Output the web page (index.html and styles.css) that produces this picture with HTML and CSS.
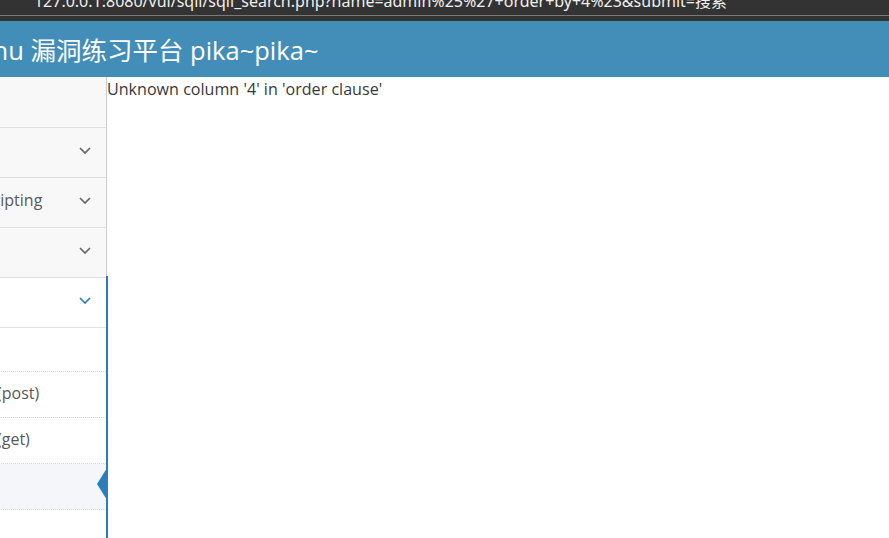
FILE: index.html
```
<!DOCTYPE html>
<html lang="zh-CN">
<head>
<meta charset="utf-8">
<title>SQL-Inject</title>
<link rel="stylesheet" href="styles.css">
</head>
<body>
<div class="topbar">
  <div class="url"><span class="url-text">127.0.0.1:8080/vul/sqli/sqli_search.php?name=admin%25%27+order+by+4%23&amp;submit=搜索</span></div>
  <div class="url-line"></div>
  <div class="url-bottom"></div>
</div>
<div class="page">
  <header class="navbar"><span class="brand">Pikachu 漏洞练习平台 pika~pika~</span></header>
  <div class="main">
    <nav class="sidebar">
      <ul class="nav-list">
        <li class="item first"><span class="label">系统介绍</span></li>
        <li class="item"><span class="label">暴力破解</span><svg class="chev" viewBox="0 0 12 7"><polyline points="1,1 6,6 11,1"/></svg></li>
        <li class="item"><span class="label">Cross-Site Scripting</span><svg class="chev" viewBox="0 0 12 7"><polyline points="1,1 6,6 11,1"/></svg></li>
        <li class="item"><span class="label">CSRF</span><svg class="chev" viewBox="0 0 12 7"><polyline points="1,1 6,6 11,1"/></svg></li>
        <li class="item open"><span class="label">SQL-Inject</span><svg class="chev" viewBox="0 0 12 7"><polyline points="1,1 6,6 11,1"/></svg></li>
        <li class="submenu">
          <ul>
            <li class="sub first-sub"><span class="label">概述</span></li>
            <li class="sub"><span class="label">数字型注入(post)</span></li>
            <li class="sub"><span class="label">字符型注入(get)</span></li>
            <li class="sub active"><span class="label">搜索型注入</span></li>
            <li class="sub last"><span class="label">xx型注入</span></li>
          </ul>
        </li>
      </ul>
    </nav>
    <main class="content">
      <p class="msg">Unknown column '4' in 'order clause'</p>
    </main>
  </div>
</div>
</body>
</html>
```
FILE: styles.css
```
html, body {
  margin: 0;
  padding: 0;
  background: #ffffff;
  overflow: hidden;
  width: 889px;
  height: 538px;
  font-family: "Open Sans", "Noto Sans CJK SC", sans-serif;
}

.topbar {
  background: #333333;
  height: 21px;
  overflow: hidden;
}
.url {
  height: 15px;
  overflow: hidden;
  display: flex;
  justify-content: flex-end;
  padding-right: 162px;
}
.url-text {
  display: block;
  flex: none;
  white-space: nowrap;
  color: #f0f0f0;
  font-family: "Noto Sans", "Noto Sans CJK SC", sans-serif;
  font-size: 16px;
  line-height: 20px;
  margin-top: -9px;
}
.url-line {
  height: 1px;
  background: #7a7a7a;
}
.url-bottom {
  height: 5px;
}

.page {
  margin-left: -84px;
  width: 973px;
}

.navbar {
  height: 56px;
  background: #438eb9;
  display: flex;
  align-items: center;
  padding-left: 15px;
}
.brand {
  color: #ffffff;
  font-size: 25.5px;
  font-family: "Open Sans", "Noto Sans CJK SC", sans-serif;
  white-space: nowrap;
  margin-top: -1px;
}

.main {
  display: flex;
  height: 461px;
}
.sidebar {
  width: 190px;
  flex: none;
  background: #f8f8f8;
  border-right: 1px solid #cccccc;
  position: relative;
}
.nav-list {
  list-style: none;
  margin: 0;
  padding: 0;
}
.item {
  display: flex;
  align-items: center;
  height: 49px;
  border-bottom: 1px solid #e0e0e0;
  background: #f8f8f8;
  color: #585858;
  font-size: 16px;
  padding-left: 0;
  padding-right: 15px;
  white-space: nowrap;
  overflow: hidden;
}
.item.first {
  height: 50px;
}
.item .label {
  flex: 1;
  margin-top: -6px;
  margin-left: -17px;
}
.chev {
  width: 12px;
  height: 7px;
  flex: none;
  margin-top: -4px;
  fill: none;
  stroke: #666666;
  stroke-width: 1.7;
}
.item.open {
  background: #ffffff;
}
.item.open .chev {
  stroke: #2b7dbc;
}
.submenu {
  background: #ffffff;
}
.submenu ul {
  list-style: none;
  margin: 0;
  padding: 0;
}
.sub {
  height: 45px;
  display: flex;
  align-items: center;
  border-bottom: 1px dotted #d8d8d8;
  color: #585858;
  font-size: 16px;
  white-space: nowrap;
  padding-left: 1px;
  position: relative;
}
.sub .label {
  margin-top: -5px;
}
.sub.first-sub {
  height: 43px;
}
.sub.active {
  background: #f4f6fa;
}
.sub.active::after {
  content: "";
  position: absolute;
  right: -1px;
  top: 4px;
  border-style: solid;
  border-color: transparent;
  border-right-color: #2b7dbc;
  border-width: 16px 10px 16px 0;
}
.sub.last {
  border-bottom: none;
}
.sidebar::after {
  content: "";
  position: absolute;
  right: -2px;
  top: 199px;
  bottom: 0;
  width: 2px;
  background: #2b7dbc;
}

.content {
  flex: 1;
}
.msg {
  margin: 0;
  padding-top: 1px;
  color: #393939;
  font-size: 16.1px;
  line-height: 22px;
}
```
